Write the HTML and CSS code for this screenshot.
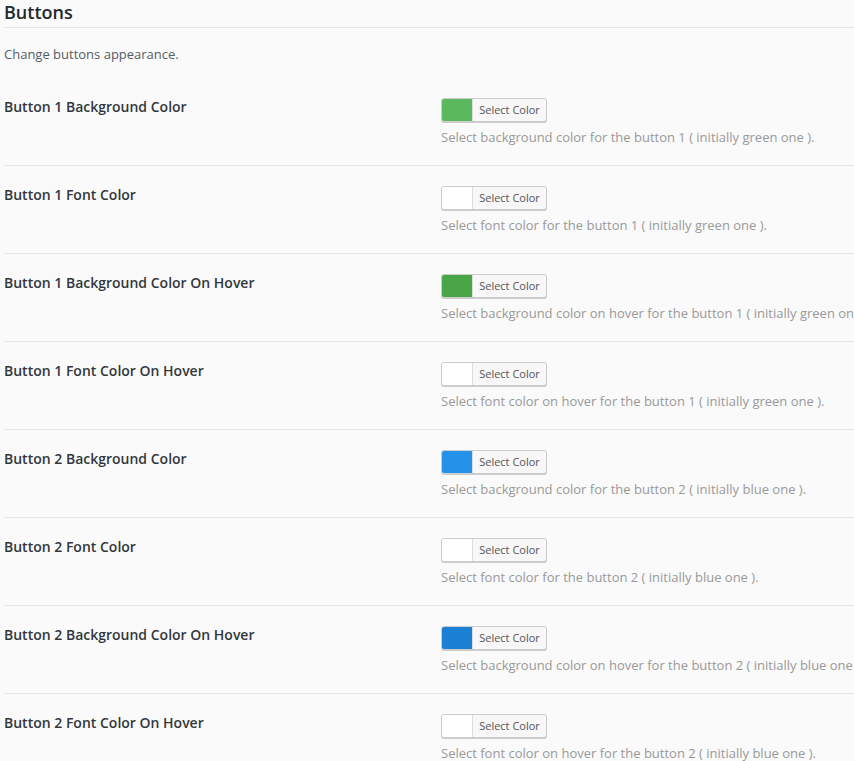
FILE: index.html
```html
<!DOCTYPE html>
<html>
<head>
<meta charset="utf-8">
<link rel="stylesheet" href="styles.css">
</head>
<body>
<div class="page">
  <h2 class="title">Buttons</h2>
  <p class="intro">Change buttons appearance.</p>
  <div class="rows">
    <div class="row">
      <div class="label">Button 1 Background Color</div>
      <div class="control">
        <div class="picker"><span class="swatch sw-green"></span><span class="picker-text">Select Color</span></div>
        <p class="desc">Select background color for the button 1 ( initially green one ).</p>
      </div>
    </div>
    <div class="row">
      <div class="label">Button 1 Font Color</div>
      <div class="control">
        <div class="picker"><span class="swatch sw-white"></span><span class="picker-text">Select Color</span></div>
        <p class="desc">Select font color for the button 1 ( initially green one ).</p>
      </div>
    </div>
    <div class="row">
      <div class="label">Button 1 Background Color On Hover</div>
      <div class="control">
        <div class="picker"><span class="swatch sw-green-dark"></span><span class="picker-text">Select Color</span></div>
        <p class="desc">Select background color on hover for the button 1 ( initially green one ).</p>
      </div>
    </div>
    <div class="row">
      <div class="label">Button 1 Font Color On Hover</div>
      <div class="control">
        <div class="picker"><span class="swatch sw-white"></span><span class="picker-text">Select Color</span></div>
        <p class="desc">Select font color on hover for the button 1 ( initially green one ).</p>
      </div>
    </div>
    <div class="row">
      <div class="label">Button 2 Background Color</div>
      <div class="control">
        <div class="picker"><span class="swatch sw-blue"></span><span class="picker-text">Select Color</span></div>
        <p class="desc">Select background color for the button 2 ( initially blue one ).</p>
      </div>
    </div>
    <div class="row">
      <div class="label">Button 2 Font Color</div>
      <div class="control">
        <div class="picker"><span class="swatch sw-white"></span><span class="picker-text">Select Color</span></div>
        <p class="desc">Select font color for the button 2 ( initially blue one ).</p>
      </div>
    </div>
    <div class="row">
      <div class="label">Button 2 Background Color On Hover</div>
      <div class="control">
        <div class="picker"><span class="swatch sw-blue-dark"></span><span class="picker-text">Select Color</span></div>
        <p class="desc">Select background color on hover for the button 2 ( initially blue one ).</p>
      </div>
    </div>
    <div class="row">
      <div class="label">Button 2 Font Color On Hover</div>
      <div class="control">
        <div class="picker"><span class="swatch sw-white"></span><span class="picker-text">Select Color</span></div>
        <p class="desc">Select font color on hover for the button 2 ( initially blue one ).</p>
      </div>
    </div>
  </div>
</div>
</body>
</html>
```
FILE: styles.css
```css
html, body {
  margin: 0;
  padding: 0;
  overflow: hidden;
  background: #fafafa;
}
body {
  font-family: "Open Sans", "Noto Sans", sans-serif;
  color: #23282d;
}
.page {
  padding-left: 4px;
  width: 1000px;
}
.title {
  margin: 0;
  font-size: 18px;
  font-weight: 600;
  line-height: 24px;
  padding-bottom: 3px;
  border-bottom: 1px solid #e5e5e5;
  color: #23282d;
}
.intro {
  margin: 17px 0 15px;
  font-size: 13px;
  line-height: 18px;
  color: #555d66;
}
.row {
  display: grid;
  grid-template-columns: 437px 1fr;
  padding: 20px 0 19px;
  border-bottom: 1px solid #e5e5e5;
}
.row:last-child {
  border-bottom: none;
}
.label {
  font-size: 14px;
  font-weight: 600;
  line-height: 18px;
  color: #32373c;
}
.control {
  display: flex;
  flex-direction: column;
  align-items: flex-start;
}
.picker {
  display: inline-flex;
  height: 22px;
  border: 1px solid #ccc;
  border-radius: 3px;
  background: #f7f7f7;
  box-shadow: 0 1px 0 #ccc;
  overflow: hidden;
}
.swatch {
  width: 30px;
  height: 22px;
  border-right: 1px solid #ddd;
}
.sw-green { background: #5cb85c; }
.sw-green-dark { background: #4aa546; }
.sw-blue { background: #2592ea; }
.sw-blue-dark { background: #1b7fd3; }
.sw-white { background: #ffffff; }
.picker-text {
  font-size: 11px;
  line-height: 22px;
  color: #555;
  width: 73px;
  text-align: center;
}
.desc {
  margin: 6px 0 0;
  font-size: 13px;
  line-height: 18px;
  color: #999;
  white-space: nowrap;
}
```
